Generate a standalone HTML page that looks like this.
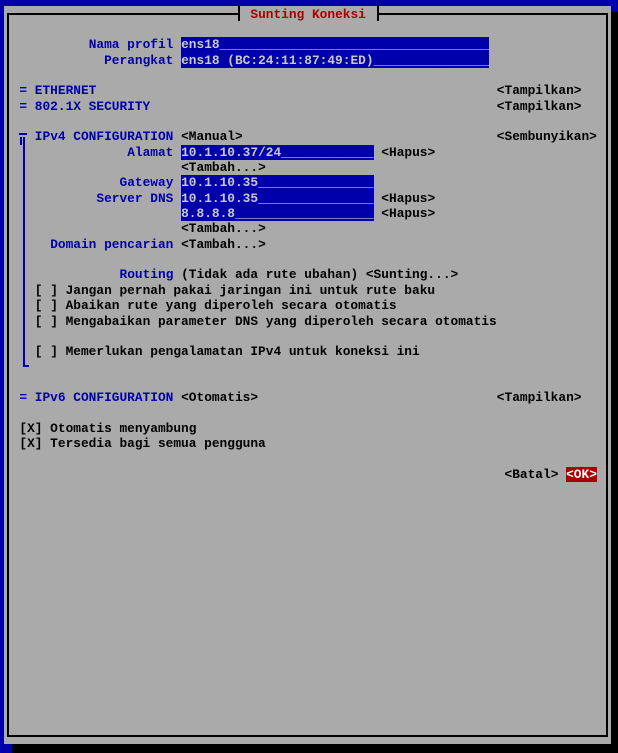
<!DOCTYPE html>
<html><head><meta charset="utf-8"><style>
html,body{margin:0;padding:0}
body{width:618px;height:753px;background:#0000aa;position:relative;overflow:hidden;font-family:"Liberation Mono",monospace;font-size:12.83px;font-weight:bold}
.win{position:absolute;left:4px;top:6px;width:607px;height:738px;background:#aaaaaa}
.sh1{position:absolute;left:611px;top:12px;width:7px;height:741px;background:#000}
.sh2{position:absolute;left:12px;top:744px;width:606px;height:9px;background:#000}
.ln{position:absolute;background:#000}
.t{position:absolute;left:calc(4px + var(--c)*7.7px);top:calc(6.5px + var(--r)*15.35px);height:15.35px;line-height:15.35px;white-space:pre;color:#000}
.n{color:#0000aa}
.f{background:#0000aa;color:#c8c8c8}
.red{color:#aa0000}
.ok{background:#aa0000;color:#fff}
.b{position:absolute;background:#0000aa}
</style></head><body>
<div class="win"></div>
<div class="sh1"></div><div class="sh2"></div>
<div class="ln" style="left:7px;top:12.5px;width:232px;height:2px"></div>
<div class="ln" style="left:378px;top:12.5px;width:230px;height:2px"></div>
<div class="ln" style="left:7px;top:12.5px;width:2px;height:724px"></div>
<div class="ln" style="left:606px;top:12.5px;width:2px;height:724px"></div>
<div class="ln" style="left:7px;top:735px;width:601px;height:2px"></div>
<div class="ln" style="left:238px;top:6px;width:2px;height:15px"></div>
<div class="ln" style="left:377px;top:6px;width:2px;height:15px"></div>
<div class="t red" style="--c:32;--r:0">Sunting Koneksi</div>

<div class="t n" style="--c:11;--r:2">Nama profil</div>
<div class="t f" style="--c:23;--r:2">ens18___________________________________</div>
<div class="t n" style="--c:13;--r:3">Perangkat</div>
<div class="t f" style="--c:23;--r:3">ens18 (BC:24:11:87:49:ED)_______________</div>

<div class="t n" style="--c:2;--r:5">= ETHERNET</div>
<div class="t" style="--c:64;--r:5">&lt;Tampilkan&gt;</div>
<div class="t n" style="--c:2;--r:6">= 802.1X SECURITY</div>
<div class="t" style="--c:64;--r:6">&lt;Tampilkan&gt;</div>

<div class="b" style="left:19px;top:133px;width:8px;height:2px"></div>
<div class="b" style="left:20px;top:137px;width:2px;height:8px"></div>
<div class="b" style="left:22.5px;top:137px;width:2px;height:230px"></div>
<div class="b" style="left:22.5px;top:365px;width:6px;height:2px"></div>

<div class="t n" style="--c:4;--r:8">IPv4 CONFIGURATION</div>
<div class="t" style="--c:23;--r:8">&lt;Manual&gt;</div>
<div class="t" style="--c:64;--r:8">&lt;Sembunyikan&gt;</div>
<div class="t n" style="--c:16;--r:9">Alamat</div>
<div class="t f" style="--c:23;--r:9">10.1.10.37/24____________</div>
<div class="t" style="--c:49;--r:9">&lt;Hapus&gt;</div>
<div class="t" style="--c:23;--r:10">&lt;Tambah...&gt;</div>
<div class="t n" style="--c:15;--r:11">Gateway</div>
<div class="t f" style="--c:23;--r:11">10.1.10.35_______________</div>
<div class="t n" style="--c:12;--r:12">Server DNS</div>
<div class="t f" style="--c:23;--r:12">10.1.10.35_______________</div>
<div class="t" style="--c:49;--r:12">&lt;Hapus&gt;</div>
<div class="t f" style="--c:23;--r:13">8.8.8.8__________________</div>
<div class="t" style="--c:49;--r:13">&lt;Hapus&gt;</div>
<div class="t" style="--c:23;--r:14">&lt;Tambah...&gt;</div>
<div class="t n" style="--c:6;--r:15">Domain pencarian</div>
<div class="t" style="--c:23;--r:15">&lt;Tambah...&gt;</div>

<div class="t n" style="--c:15;--r:17">Routing</div>
<div class="t" style="--c:23;--r:17">(Tidak ada rute ubahan) &lt;Sunting...&gt;</div>
<div class="t" style="--c:4;--r:18">[ ] Jangan pernah pakai jaringan ini untuk rute baku</div>
<div class="t" style="--c:4;--r:19">[ ] Abaikan rute yang diperoleh secara otomatis</div>
<div class="t" style="--c:4;--r:20">[ ] Mengabaikan parameter DNS yang diperoleh secara otomatis</div>
<div class="t" style="--c:4;--r:22">[ ] Memerlukan pengalamatan IPv4 untuk koneksi ini</div>

<div class="t n" style="--c:2;--r:25">= IPv6 CONFIGURATION</div>
<div class="t" style="--c:23;--r:25">&lt;Otomatis&gt;</div>
<div class="t" style="--c:64;--r:25">&lt;Tampilkan&gt;</div>
<div class="t" style="--c:2;--r:27">[X] Otomatis menyambung</div>
<div class="t" style="--c:2;--r:28">[X] Tersedia bagi semua pengguna</div>

<div class="t" style="--c:65;--r:30">&lt;Batal&gt;</div>
<div class="t ok" style="--c:73;--r:30">&lt;OK&gt;</div>
</body></html>
